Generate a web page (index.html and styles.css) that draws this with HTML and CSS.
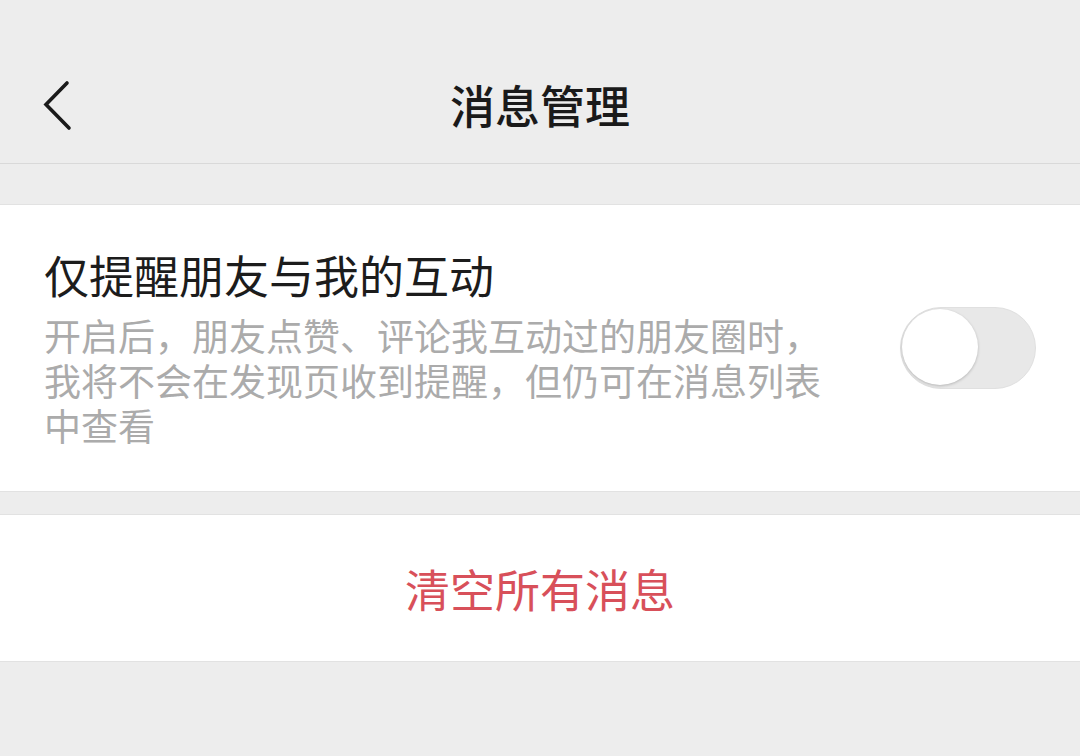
FILE: index.html
```html
<!DOCTYPE html>
<html lang="zh-CN">
<head>
<meta charset="utf-8">
<title>消息管理</title>
<link rel="stylesheet" href="styles.css">
</head>
<body>
<header class="header">
  <div class="nav">
    <span class="back">
      <svg width="40" height="60" viewBox="0 0 40 60"><path d="M24 10 L3 31.5 L26 55" fill="none" stroke="#1a1a1a" stroke-width="3.6" stroke-linecap="round" stroke-linejoin="miter"/></svg>
    </span>
    <h1 class="title">消息管理</h1>
  </div>
</header>
<div class="spacer-top"></div>
<section class="card option">
  <div class="option-text">
    <div class="option-title">仅提醒朋友与我的互动</div>
    <div class="option-desc">开启后，朋友点赞、评论我互动过的朋友圈时，我将不会在发现页收到提醒，但仍可在消息列表中查看</div>
  </div>
  <div class="switch"><span class="knob"></span></div>
</section>
<div class="spacer-mid"></div>
<section class="card action">
  <span class="danger">清空所有消息</span>
</section>
</body>
</html>
```
FILE: styles.css
```css
html, body {
  margin: 0;
  padding: 0;
}
body {
  background: #ededed;
  font-family: "Noto Sans CJK SC", "Noto Sans", sans-serif;
  width: 1080px;
  height: 756px;
  overflow: hidden;
}
.header {
  height: 103px;
  padding-top: 60px;
  border-bottom: 1px solid #d9d9d9;
}
.nav {
  position: relative;
  height: 90px;
  display: flex;
  align-items: center;
  justify-content: center;
}
.back {
  position: absolute;
  left: 43px;
  top: 13px;
  width: 40px;
  height: 60px;
}
.back svg {
  display: block;
}
.title {
  margin: 0;
  font-size: 45px;
  font-weight: 500;
  color: #1a1a1a;
  line-height: 56px;
}
.spacer-top {
  height: 40px;
}
.card {
  background: #ffffff;
  border-top: 1px solid #e2e2e2;
  border-bottom: 1px solid #e2e2e2;
}
.option {
  display: flex;
  align-items: center;
  justify-content: space-between;
  padding: 40px 44px 41px 44px;
  height: 205px;
}
.option-text {
  width: 790px;
}
.option-title {
  font-size: 45px;
  line-height: 56px;
  color: #1c1c1c;
  margin-bottom: 10px;
}
.option-desc {
  font-size: 37px;
  line-height: 45px;
  color: #ababab;
}
.switch {
  position: relative;
  width: 136px;
  height: 82px;
  border-radius: 41px;
  background: #e8e8e8;
  box-sizing: border-box;
  border: 1px solid #e0e0e0;
}
.knob {
  position: absolute;
  left: 1px;
  top: 1px;
  width: 76px;
  height: 76px;
  border-radius: 50%;
  background: #ffffff;
  box-shadow: 0 1px 3px rgba(0,0,0,0.22);
}
.spacer-mid {
  height: 22px;
}
.action {
  height: 146px;
  display: flex;
  align-items: center;
  justify-content: center;
}
.danger {
  font-size: 45px;
  color: #d8505a;
  line-height: 56px;
  margin-top: 2px;
}
```
